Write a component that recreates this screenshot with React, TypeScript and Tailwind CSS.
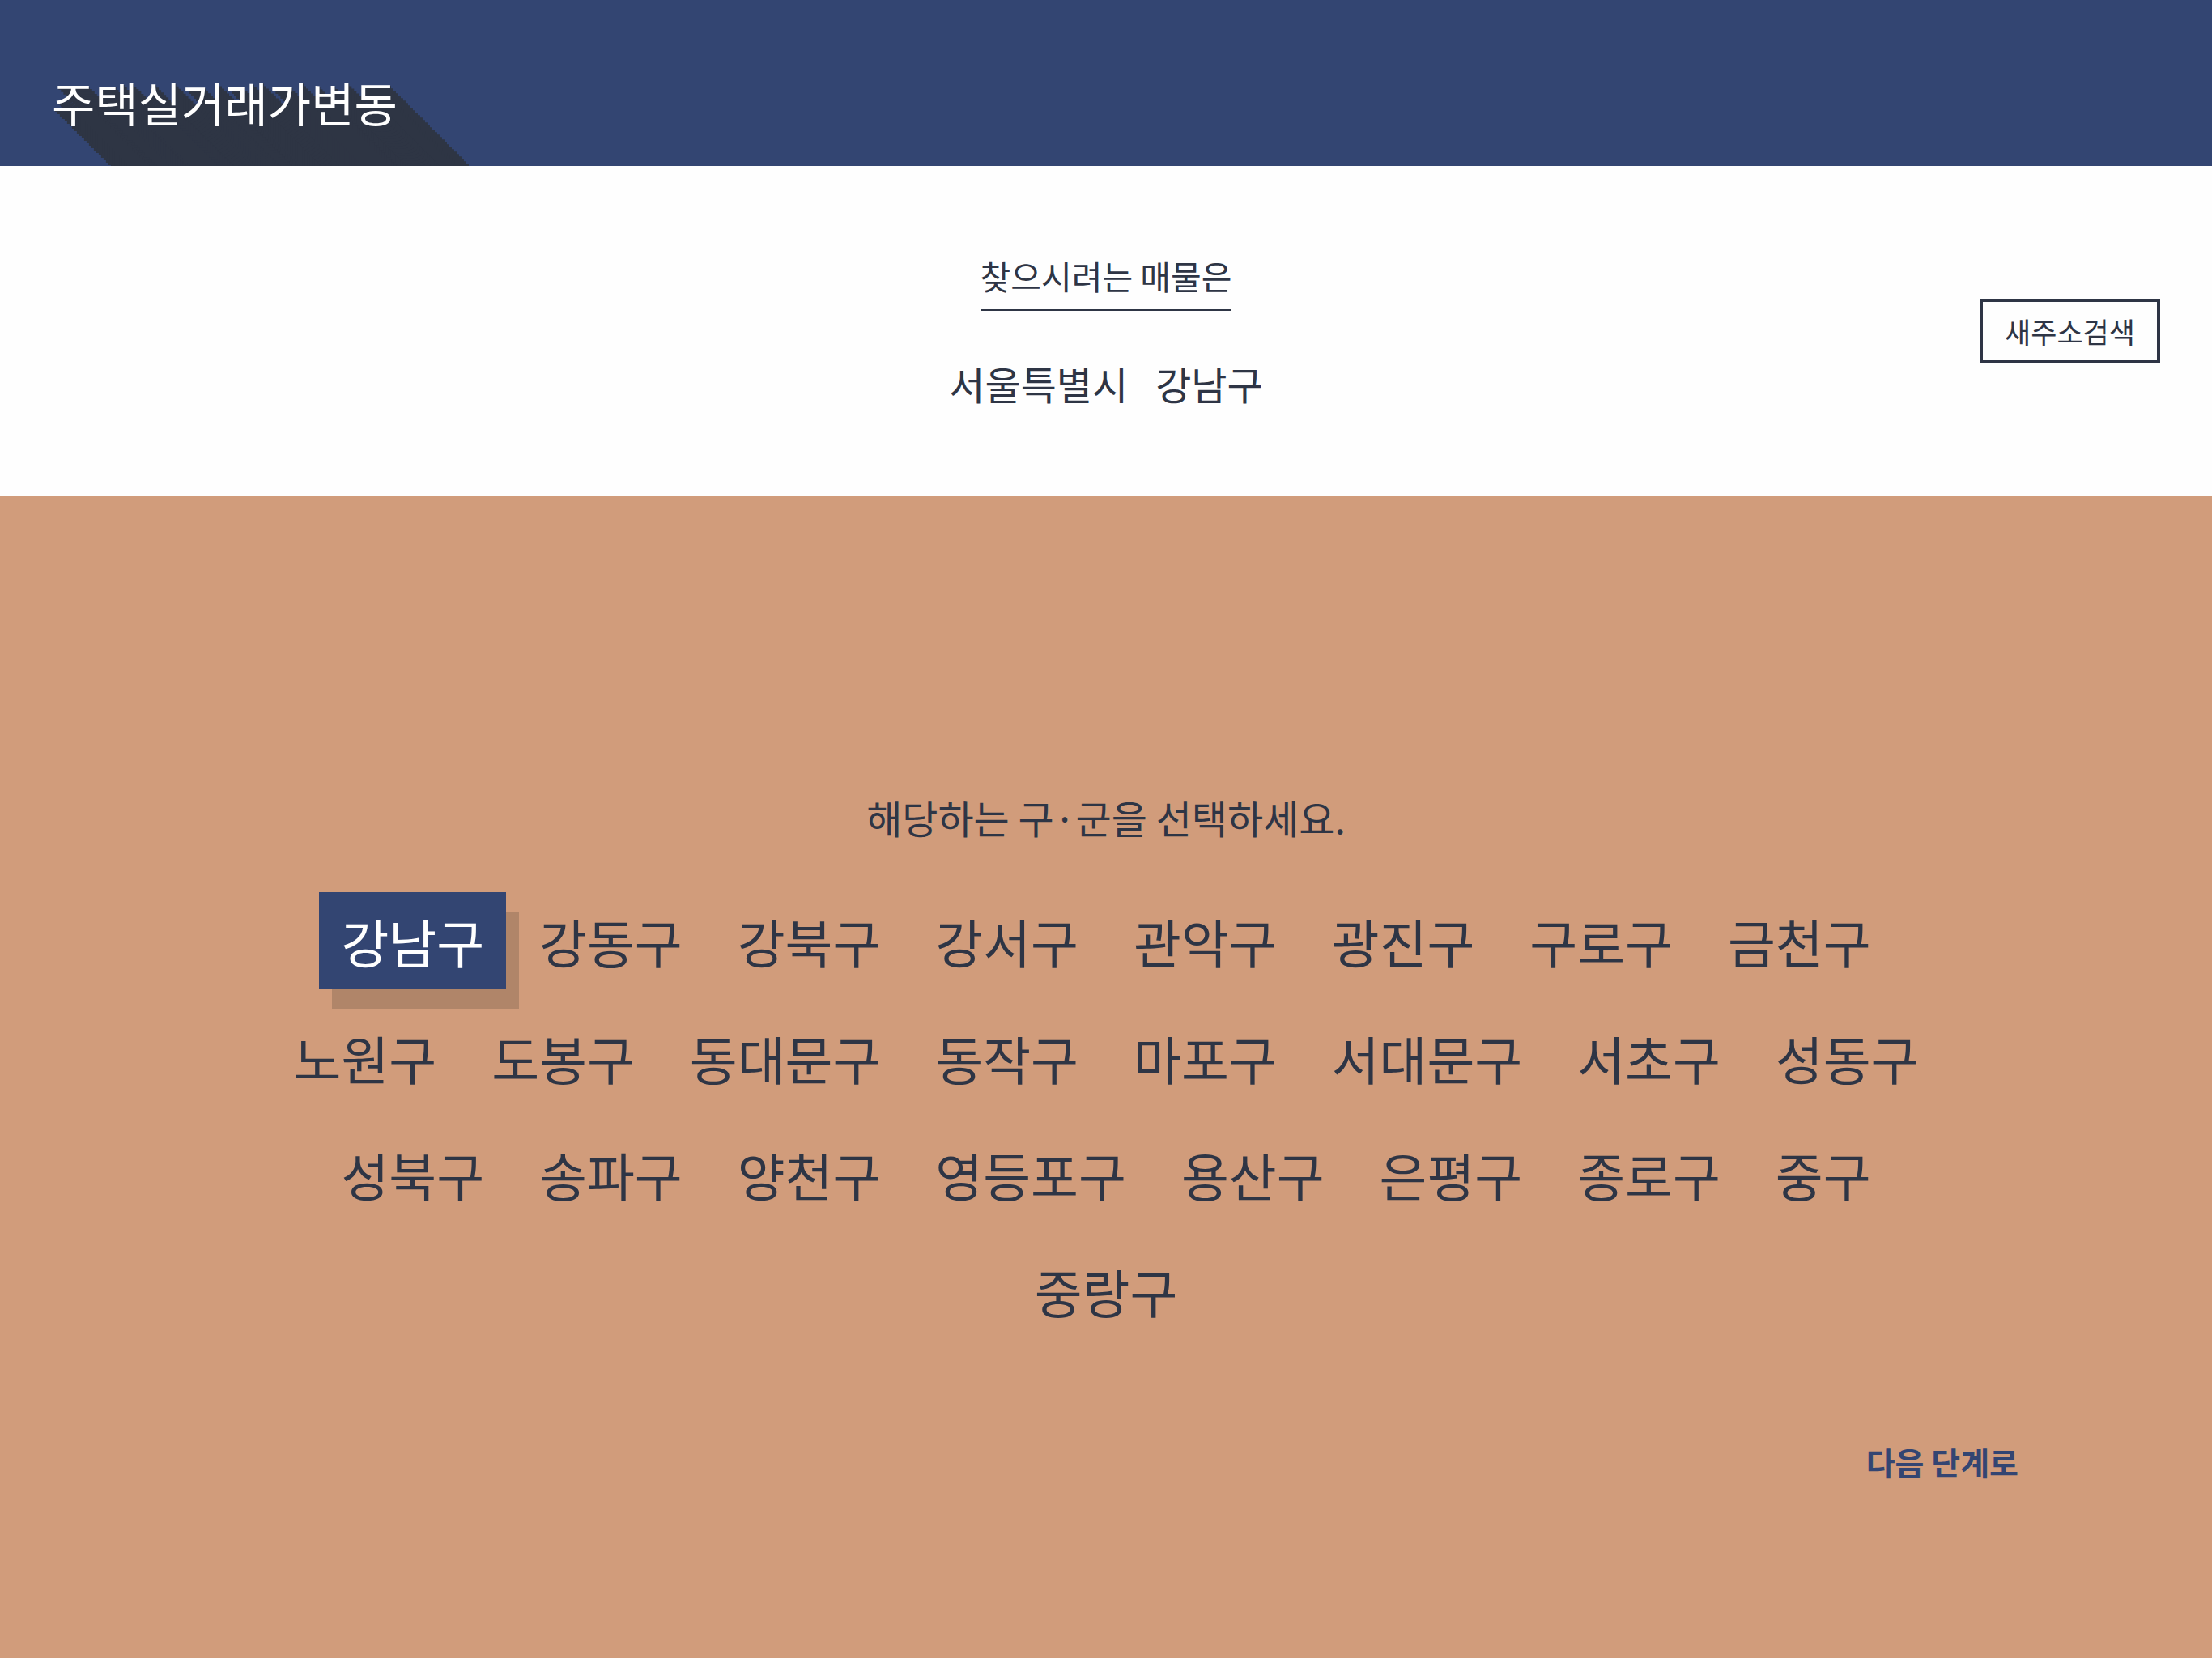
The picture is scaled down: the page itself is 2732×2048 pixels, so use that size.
import React from "react";

const rows: string[] = [
  "강남구", "강동구", "강북구", "강서구", "관악구", "광진구", "구로구", "금천구",
  "노원구", "도봉구", "동대문구", "동작구", "마포구", "서대문구", "서초구", "성동구",
  "성북구", "송파구", "양천구", "영등포구", "용산구", "은평구", "종로구", "중구",
  "중랑구",
];

export default function App() {
  const selected = "강남구";
  return (
    <div className="w-[2732px] min-h-[2048px] flex flex-col font-['Noto_Sans_CJK_KR',sans-serif] text-[#2e3545]">
      <header className="h-[205px] bg-[#334572] overflow-hidden flex items-start">
        <h1 className="pl-[64px] pt-[86px] text-[58px] leading-[81px] font-normal text-white [text-shadow:1px_1px_0_#2e3544,4px_4px_0_#2e3544,7px_7px_0_#2e3544,10px_10px_0_#2e3544,13px_13px_0_#2e3544,16px_16px_0_#2e3544,19px_19px_0_#2e3544,22px_22px_0_#2e3544,25px_25px_0_#2e3544,28px_28px_0_#2e3544,31px_31px_0_#2e3544,34px_34px_0_#2e3544,37px_37px_0_#2e3544,40px_40px_0_#2e3544,43px_43px_0_#2e3544,46px_46px_0_#2e3544,49px_49px_0_#2e3544,52px_52px_0_#2e3544,55px_55px_0_#2e3544,58px_58px_0_#2e3544,61px_61px_0_#2e3544,64px_64px_0_#2e3544,67px_67px_0_#2e3544,70px_70px_0_#2e3544,73px_73px_0_#2e3544,76px_76px_0_#2e3544,79px_79px_0_#2e3544,82px_82px_0_#2e3544,85px_85px_0_#2e3544,88px_88px_0_#2e3544,91px_91px_0_#2e3544,94px_94px_0_#2e3544,97px_97px_0_#2e3544,100px_100px_0_#2e3544,103px_103px_0_#2e3544,106px_106px_0_#2e3544,109px_109px_0_#2e3544]">
          주택실거래가변동
        </h1>
      </header>

      <section className="h-[408px] bg-[#fefefe] grid grid-cols-[1fr_auto_1fr] items-center">
        <div />
        <div className="flex flex-col items-center">
          <span className="text-[41px] leading-[57px] pb-[13px] border-b-2 border-[#2e3545]">
            찾으시려는 매물은
          </span>
          <div className="mt-[56px] flex gap-[34px] text-[48px] leading-[66px]">
            <span>서울특별시</span>
            <span>강남구</span>
          </div>
        </div>
        <div className="flex justify-end pr-[64px]">
          <button className="border-4 border-[#2e3545] bg-transparent px-[27px] py-[12px] text-[35px] leading-[48px] text-[#2e3545]">
            새주소검색
          </button>
        </div>
      </section>

      <section className="flex-1 bg-[#d19c7b] pt-[363px] pb-[200px] flex flex-col">
        <p className="text-center text-[48px] leading-[66px]">해당하는 구·군을 선택하세요.</p>
        <div className="mt-[60px] mx-auto w-[2120px] flex flex-wrap justify-center gap-y-[24px]">
          {rows.map((name) => (
            <button
              key={name}
              className={
                name === selected
                  ? "mx-[7px] px-[27px] py-[15px] text-[64px] leading-[90px] bg-[#334572] text-white shadow-[16px_24px_0_#b08569]"
                  : "mx-[7px] px-[27px] py-[15px] text-[64px] leading-[90px] bg-transparent text-[#2e3545]"
              }
            >
              {name}
            </button>
          ))}
        </div>
        <div className="mt-[124px] flex justify-end pr-[239px]">
          <a className="text-[39px] leading-[54px] font-bold text-[#334572] cursor-pointer">다음 단계로</a>
        </div>
      </section>
    </div>
  );
}
